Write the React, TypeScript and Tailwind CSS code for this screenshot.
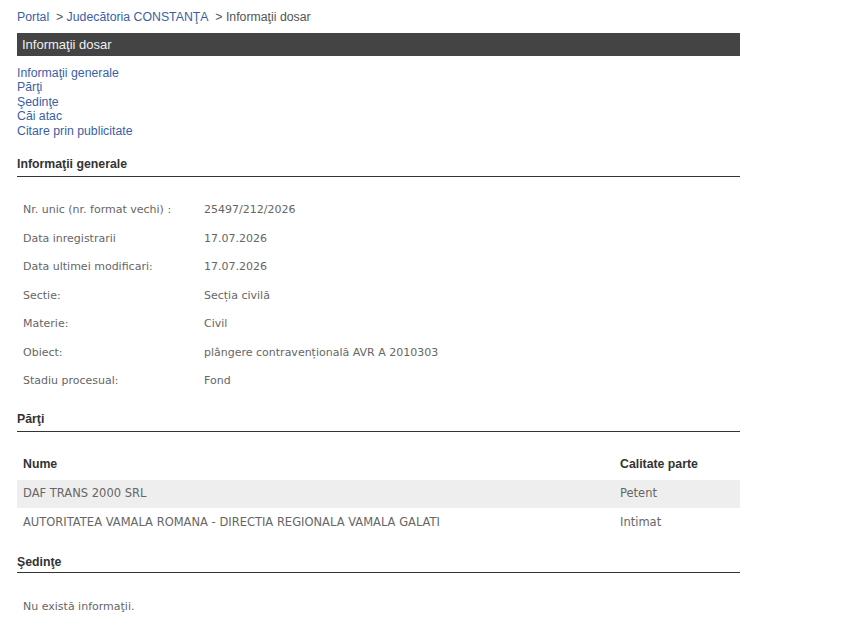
import React from "react";

const rows: [string, string][] = [
  ["Nr. unic (nr. format vechi) :", "25497/212/2026"],
  ["Data inregistrarii", "17.07.2026"],
  ["Data ultimei modificari:", "17.07.2026"],
  ["Sectie:", "Secția civilă"],
  ["Materie:", "Civil"],
  ["Obiect:", "plângere contravențională AVR A 2010303"],
  ["Stadiu procesual:", "Fond"],
];

const parti: [string, string][] = [
  ["DAF TRANS 2000 SRL", "Petent"],
  ["AUTORITATEA VAMALA ROMANA - DIRECTIA REGIONALA VAMALA GALATI", "Intimat"],
];

function Heading({ children, tight }: { children: React.ReactNode; tight?: boolean }) {
  return (
    <div
      className={`border-b border-[#333] text-[12.3px] leading-[14px] font-bold text-[#333] ${tight ? "pb-[3px]" : "pb-[5px]"}`}
    >
      {children}
    </div>
  );
}

export default function App() {
  return (
    <div className="min-h-screen bg-white font-['Liberation_Sans',Arial,sans-serif]">
      <div className="w-[723px] ml-[17px] pt-[10px]">
        {/* breadcrumb */}
        <div className="text-[12.3px] leading-[14px] text-[#555]">
          <a className="text-[#3b5fa5]">Portal</a>
          <span>&nbsp; &gt; </span>
          <a className="text-[#3b5fa5]">Judecătoria CONSTANŢA</a>
          <span>&nbsp; &gt; Informaţii dosar</span>
        </div>

        <div className="mt-[9px] h-[23px] bg-[#444] pl-[5px] text-[13px] leading-[23px] text-[#f0f0f0]">
          Informaţii dosar
        </div>

        <div className="mt-[10px] flex flex-col text-[12.3px] leading-[14.4px] text-[#3b5fa5]">
          <a>Informaţii generale</a>
          <a>Părţi</a>
          <a>Şedinţe</a>
          <a>Căi atac</a>
          <a>Citare prin publicitate</a>
        </div>

        <div className="mt-[19px]">
          <Heading>Informaţii generale</Heading>
        </div>

        <div className="mt-[19px] font-['DejaVu_Sans',Verdana,sans-serif] text-[11px] text-[#666]">
          {rows.map(([k, v]) => (
            <div key={k} className="flex h-[28.5px] items-center pl-[6px]">
              <div className="w-[181px]">{k}</div>
              <div>{v}</div>
            </div>
          ))}
        </div>

        <div className="mt-[16px]">
          <Heading>Părţi</Heading>
        </div>

        {/* parti table */}
        <div className="mt-[20px] font-['DejaVu_Sans',Verdana,sans-serif] text-[11.5px] text-[#666]">
          <div className="flex h-[28px] items-end pb-[9px] pl-[6px] font-['Liberation_Sans',Arial,sans-serif] text-[12.3px] leading-[14px] font-bold text-[#333]">
            <div className="w-[597px]">Nume</div>
            <div>Calitate parte</div>
          </div>
          {parti.map(([n, c], i) => (
            <div
              key={n}
              className={`flex h-[28.5px] items-center pl-[6px] ${i % 2 === 0 ? "bg-[#eeeeee]" : ""}`}
            >
              <div className="w-[597px]">{n}</div>
              <div>{c}</div>
            </div>
          ))}
        </div>

        <div className="mt-[18px]">
          <Heading tight>Şedinţe</Heading>
        </div>

        <div className="mt-[27px] pl-[6px] font-['DejaVu_Sans',Verdana,sans-serif] text-[11px] leading-[14px] text-[#666]">
          Nu există informaţii.
        </div>
      </div>
    </div>
  );
}
